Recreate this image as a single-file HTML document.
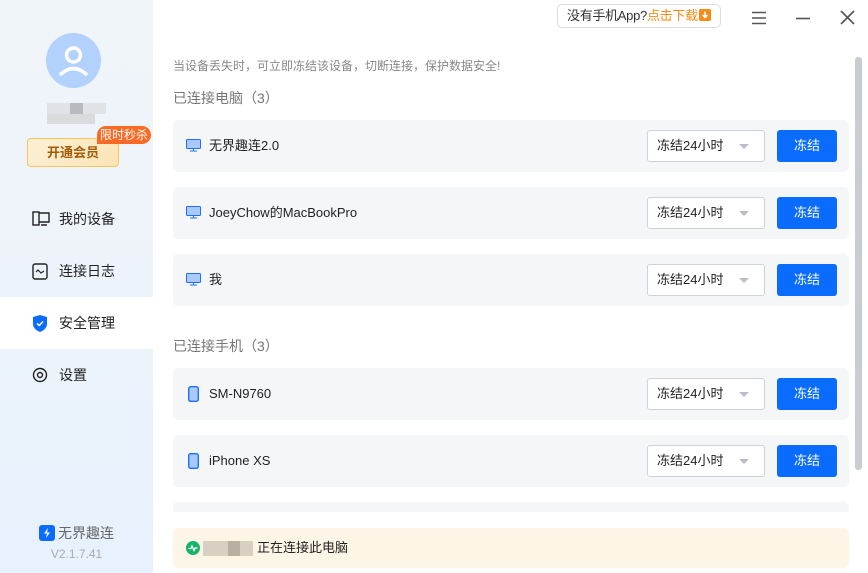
<!DOCTYPE html>
<html><head><meta charset="utf-8"><style>
*{margin:0;padding:0;box-sizing:border-box}
body{width:868px;height:573px;overflow:hidden;background:#fff;font-family:"Liberation Sans","Noto Sans CJK SC",sans-serif;position:relative;color:#222}
.side{position:absolute;left:0;top:0;width:153px;height:573px;background:linear-gradient(180deg,#f0f5f9 0%,#edf3fa 50%,#e7f2fe 100%)}
.av{position:absolute;left:46px;top:33px;width:55px;height:55px;border-radius:50%;background:#b3d1fd}
.blur{position:absolute;background:#d6d9dd}
.vip{position:absolute;left:27px;top:138px;width:92px;height:29px;border:1px solid #f6c35d;border-radius:4px;background:linear-gradient(135deg,#fdf0d6,#fbe4b5);color:#a55a08;font-size:13px;font-weight:bold;text-align:center;line-height:27px}
.tag{position:absolute;left:97px;top:126px;width:54px;height:18px;background:#fb6a24;color:#fff;font-size:12px;line-height:18px;text-align:center;border-radius:9px 9px 9px 0}
.nav{position:absolute;left:0;width:153px;height:52px;font-size:14px;line-height:52px;padding-left:59px;color:#222}
.nav svg{position:absolute;left:32px;top:18px}
.ver{position:absolute;left:0;width:153px;text-align:center}
.top{position:absolute;left:557px;top:4px;width:164px;height:24px;border:1px solid #ddd;border-radius:5px;font-size:13px;line-height:22px;padding-left:9px;color:#333;white-space:nowrap;letter-spacing:-0.3px}
.top b{font-weight:normal;color:#f98a16}
.dl{display:inline-block;width:12px;height:12px;background:#f98a16;border-radius:2px;vertical-align:-1px;position:relative;margin-left:1px}
.desc{position:absolute;left:173px;top:57px;font-size:12px;color:#888}
.h{position:absolute;left:173px;font-size:14px;color:#777}
.card{position:absolute;left:173px;width:676px;height:52px;background:#f5f6f8;border-radius:5px}
.card .n{position:absolute;left:36px;top:0;line-height:52px;font-size:13px;color:#222}
.card svg{position:absolute;left:13px;top:19px}
.sel{position:absolute;left:474px;top:10px;width:118px;height:32px;border:1px solid #cfd3d8;border-radius:3px;background:#fff;font-size:13px;line-height:30px;padding-left:9px}
.sel:after{content:"";position:absolute;right:15px;top:13px;border:5px solid transparent;border-top:5px solid #b9bdc3}
.btn{position:absolute;left:604px;top:10px;width:60px;height:32px;background:#0a6cff;border-radius:3px;color:#fff;font-size:13px;line-height:32px;text-align:center}
.scroll{position:absolute;left:855px;top:57px;width:7px;height:413px;background:#c9ccd1;border-radius:3px}
.bar{position:absolute;left:173px;top:528px;width:676px;height:40px;background:#fdf6e7;border-radius:6px}
</style></head><body>
<div class="side">
 <div class="av"><svg width="55" height="55" viewBox="0 0 55 55"><circle cx="27.5" cy="22" r="7" fill="none" stroke="#fff" stroke-width="3.5"/><path d="M15 41 Q27.5 30 40 41" fill="none" stroke="#fff" stroke-width="3.5" stroke-linecap="round"/></svg></div>
 <div class="blur" style="left:47px;top:103px;width:59px;height:11px;background:#e0e2e5"></div>
 <div class="blur" style="left:70px;top:103px;width:13px;height:11px;background:#b8babd"></div>
 <div class="blur" style="left:47px;top:114px;width:48px;height:10px;background:#d9dbde"></div>
 <div class="vip">开通会员</div>
 <div class="tag">限时秒杀</div>
 <div class="nav" style="top:193px"><svg width="18" height="16" viewBox="0 0 18 16"><rect x="1" y="1" width="6" height="13" fill="none" stroke="#222" stroke-width="1.4"/><path d="M7 2H17V11H7M9 14H15" fill="none" stroke="#222" stroke-width="1.4"/></svg>我的设备</div>
 <div class="nav" style="top:245px"><svg width="16" height="17" viewBox="0 0 16 17"><rect x="1" y="1" width="14" height="15" rx="2" fill="none" stroke="#222" stroke-width="1.4"/><path d="M4 9L6 7 9 10 12 8" fill="none" stroke="#222" stroke-width="1.2"/></svg>连接日志</div>
 <div class="nav" style="top:297px;background:#fff"><svg width="16" height="17" viewBox="0 0 16 17"><path d="M1 2L8 0 15 2V9C15 13 11 16 8 17 5 16 1 13 1 9Z" fill="#0a6cff"/><path d="M5 8.5L7.3 10.5 11 6.5" fill="none" stroke="#fff" stroke-width="1.5"/></svg>安全管理</div>
 <div class="nav" style="top:349px"><svg width="16" height="16" viewBox="0 0 16 16"><circle cx="8" cy="8" r="6.5" fill="none" stroke="#222" stroke-width="1.4"/><circle cx="8" cy="8" r="2.5" fill="none" stroke="#222" stroke-width="1.4"/></svg>设置</div>
 <div class="ver" style="top:523px;font-size:14px;color:#666"><svg width="16" height="16" viewBox="0 0 16 16" style="vertical-align:-3px;margin-right:3px"><rect width="16" height="16" rx="3" fill="#0a6cff"/><path d="M9 3L5 8.5H8L7 13 11 7.5H8Z" fill="#fff"/></svg>无界趣连</div>
 <div class="ver" style="top:547px;font-size:12px;color:#aaa">V2.1.7.41</div>
</div>
<div class="top">没有手机App?<b>点击下载</b><span class="dl"><svg width="12" height="12" viewBox="0 0 12 12" style="position:absolute;left:0;top:0"><path d="M6 2.5V8M3.5 6L6 8.5 8.5 6" fill="none" stroke="#fff" stroke-width="1.6"/></svg></span></div>
<svg style="position:absolute;left:751px;top:11px" width="16" height="14" viewBox="0 0 16 14"><path d="M1 1.5H15M1 7H15M1 12.5H15" stroke="#555" stroke-width="1.6"/></svg>
<svg style="position:absolute;left:795px;top:11px" width="16" height="14"><path d="M1 7.5H15" stroke="#555" stroke-width="1.6"/></svg>
<svg style="position:absolute;left:840px;top:10px" width="15" height="15"><path d="M1 1L14 14M14 1L1 14" stroke="#555" stroke-width="1.6"/></svg>
<div class="desc">当设备丢失时，可立即冻结该设备，切断连接，保护数据安全!</div>
<div class="h" style="top:88px">已连接电脑（3）</div>
<div class="card" style="top:120px"><svg width="15" height="13" viewBox="0 0 15 13"><rect x="0.5" y="0.5" width="14" height="9" rx="1" fill="#a9c9fb" stroke="#1c6fff"/><path d="M4 12H11M7.5 10V12" stroke="#1c6fff"/></svg><div class="n">无界趣连2.0</div><div class="sel">冻结24小时</div><div class="btn">冻结</div></div>
<div class="card" style="top:187px"><svg width="15" height="13" viewBox="0 0 15 13"><rect x="0.5" y="0.5" width="14" height="9" rx="1" fill="#a9c9fb" stroke="#1c6fff"/><path d="M4 12H11M7.5 10V12" stroke="#1c6fff"/></svg><div class="n">JoeyChow的MacBookPro</div><div class="sel">冻结24小时</div><div class="btn">冻结</div></div>
<div class="card" style="top:254px"><svg width="15" height="13" viewBox="0 0 15 13"><rect x="0.5" y="0.5" width="14" height="9" rx="1" fill="#a9c9fb" stroke="#1c6fff"/><path d="M4 12H11M7.5 10V12" stroke="#1c6fff"/></svg><div class="n">我</div><div class="sel">冻结24小时</div><div class="btn">冻结</div></div>
<div class="h" style="top:336px">已连接手机（3）</div>
<div class="card" style="top:368px"><svg width="11" height="16" viewBox="0 0 11 16" style="left:15px;top:18px"><rect x="0.7" y="0.7" width="9.6" height="14.6" rx="2" fill="#a9c9fb" stroke="#1c6fff" stroke-width="1.4"/></svg><div class="n">SM-N9760</div><div class="sel">冻结24小时</div><div class="btn">冻结</div></div>
<div class="card" style="top:435px"><svg width="11" height="16" viewBox="0 0 11 16" style="left:15px;top:18px"><rect x="0.7" y="0.7" width="9.6" height="14.6" rx="2" fill="#a9c9fb" stroke="#1c6fff" stroke-width="1.4"/></svg><div class="n">iPhone XS</div><div class="sel">冻结24小时</div><div class="btn">冻结</div></div>
<div class="card" style="top:502px;height:10px;border-radius:5px 5px 0 0"></div>
<div class="scroll"></div>
<div class="bar">
 <svg style="position:absolute;left:13px;top:13px" width="14" height="14" viewBox="0 0 14 14"><circle cx="7" cy="7" r="7" fill="#17b26a"/><path d="M2.5 7.5H5L6 5 8 9.5 9 7H11.5" fill="none" stroke="#fff" stroke-width="1.3"/></svg>
 <div style="position:absolute;left:30px;top:13px;width:50px;height:15px;background:#d8d0c2"></div>
 <div style="position:absolute;left:55px;top:13px;width:12px;height:15px;background:#b8b0a3"></div>
 <div style="position:absolute;left:84px;top:0;line-height:40px;font-size:13px;color:#222">正在连接此电脑</div>
</div>
</body></html>
